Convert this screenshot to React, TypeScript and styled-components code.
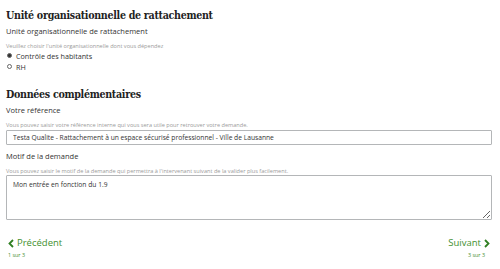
import React from 'react';
import styled, { createGlobalStyle } from 'styled-components';

const Global = createGlobalStyle`
  html, body {
    margin: 0;
    padding: 0;
    background: #fff;
  }
  body {
    font-family: 'Open Sans', 'Liberation Sans', sans-serif;
    color: #333;
  }
`;

const Page = styled.div`
  width: 500px;
  height: 269px;
  box-sizing: border-box;
  padding: 6px 8px 0 6px;
  display: flex;
  flex-direction: column;
`;

const Heading = styled.h2<{ $top?: number }>`
  margin: ${(p) => p.$top ?? 0}px 0 0 0;
  font-family: 'DejaVu Serif', serif;
  font-stretch: condensed;
  font-weight: bold;
  font-size: 10.6px;
  letter-spacing: -0.3px;
  line-height: 18px;
  color: #222;
`;

const Label = styled.div<{ $top?: number }>`
  margin-top: ${(p) => p.$top ?? 2}px;
  font-size: 7.5px;
  line-height: 11px;
  color: #333;
`;

const Hint = styled.div`
  margin-top: 5px;
  font-size: 5.6px;
  line-height: 8px;
  color: #9a9a9a;
`;

const Options = styled.div`
  display: flex;
  flex-direction: column;
`;

const Option = styled.label`
  display: flex;
  align-items: center;
  gap: 4px;
  height: 11px;
  font-size: 7.2px;
  color: #333;
`;

const Dot = styled.span<{ $on?: boolean }>`
  width: 3px;
  height: 3px;
  margin-left: 1px;
  border-radius: 50%;
  border: 0.6px solid #666;
  background: ${(p) => (p.$on ? '#333' : '#fff')};
`;

const Input = styled.input`
  margin-top: 1px;
  width: 486px;
  height: 15px;
  box-sizing: border-box;
  border: 1px solid #b4b6b8;
  border-radius: 1px;
  padding: 0 6px;
  font-family: 'Open Sans', 'Liberation Sans', sans-serif;
  font-size: 6.7px;
  color: #333;
  outline: none;
`;

const Area = styled.textarea`
  width: 486px;
  height: 45px;
  box-sizing: border-box;
  border: 1px solid #b4b6b8;
  border-radius: 1px;
  padding: 4px 6px;
  margin: 0;
  font-family: 'Open Sans', 'Liberation Sans', sans-serif;
  font-size: 6.7px;
  color: #333;
  outline: none;
  display: block;
`;

const Nav = styled.div`
  margin-top: 16px;
  display: flex;
  justify-content: space-between;
  padding: 0 2px 0 2px;
`;

const Step = styled.div<{ $right?: boolean }>`
  display: flex;
  flex-direction: column;
  align-items: ${(p) => (p.$right ? 'flex-end' : 'flex-start')};
`;

const NavLink = styled.a`
  display: flex;
  align-items: center;
  gap: 3px;
  font-size: 9.5px;
  line-height: 14px;
  color: #3f8f2f;
  text-decoration: none;
`;

const Count = styled.div<{ $right?: boolean }>`
  font-size: 5.4px;
  line-height: 8px;
  color: #3f8f2f;
  margin-top: 1px;
  ${(p) => (p.$right ? 'margin-right: 5px;' : 'margin-left: 0;')}
`;

const Chevron = ({ dir }: { dir: 'l' | 'r' }) => (
  <svg width="6" height="9" viewBox="0 0 6 9">
    <path
      d={dir === 'l' ? 'M5 1 L1.5 4.5 L5 8' : 'M1 1 L4.5 4.5 L1 8'}
      fill="none"
      stroke="#2f7f22"
      strokeWidth="1.8"
    />
  </svg>
);

export default function App() {
  return (
    <Page>
      <Global />
      <Heading>Unité organisationnelle de rattachement</Heading>
      <Label>Unité organisationnelle de rattachement</Label>
      <Hint>Veuillez choisir l'unité organisationnelle dont vous dépendez</Hint>
      <Options>
        <Option>
          <Dot $on />
          Contrôle des habitants
        </Option>
        <Option>
          <Dot />
          RH
        </Option>
      </Options>
      <Heading $top={13}>Données complémentaires</Heading>
      <Label>Votre référence</Label>
      <Hint>Vous pouvez saisir votre référence interne qui vous sera utile pour retrouver votre demande.</Hint>
      <Input
        readOnly
        value="Testa Qualite - Rattachement à un espace sécurisé professionnel - Ville de Lausanne"
      />
      <Label $top={6}>Motif de la demande</Label>
      <Hint>
        Vous pouvez saisir le motif de la demande qui permettra à l'intervenant suivant de la valider plus facilement.
      </Hint>
      <Area readOnly defaultValue="Mon entrée en fonction du 1.9" />
      <Nav>
        <Step>
          <NavLink href="#">
            <Chevron dir="l" />
            Précédent
          </NavLink>
          <Count>1 sur 3</Count>
        </Step>
        <Step $right>
          <NavLink href="#">
            Suivant
            <Chevron dir="r" />
          </NavLink>
          <Count $right>3 sur 3</Count>
        </Step>
      </Nav>
    </Page>
  );
}
